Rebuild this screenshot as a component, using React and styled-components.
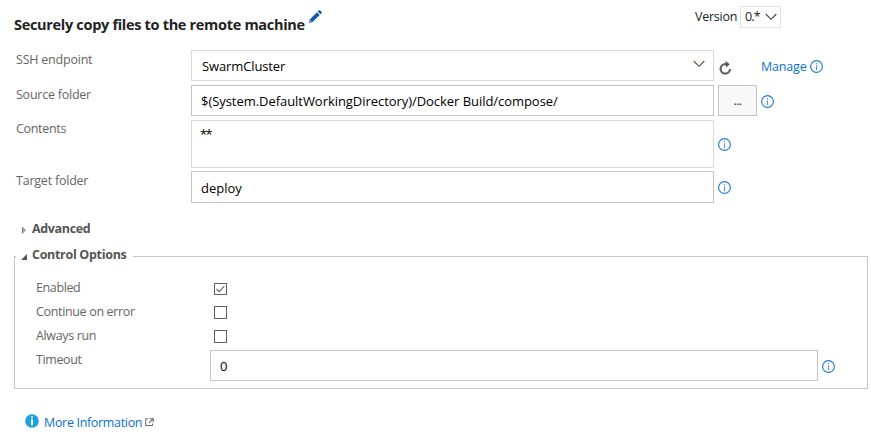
import React from "react";
import styled, { createGlobalStyle } from "styled-components";

const GlobalStyle = createGlobalStyle`
  *, *::before, *::after { box-sizing: border-box; }
  body { margin: 0; background: #fff; }
  svg { display: block; flex: none; }
`;

const Page = styled.main`
  width: 871px;
  height: 446px;
  overflow: hidden;
  background: #fff;
  color: #666;
  font: 12.5px/16px "Open Sans", "Noto Sans", sans-serif;
  white-space: nowrap;
`;

const Header = styled.header`
  display: flex;
  align-items: flex-start;
  height: 50px;
  padding: 6px 90px 0 14px;
`;

const Title = styled.h1`
  margin: 9px 4px 0 0;
  width: 291px;
  color: #222;
  font-size: 14.5px;
  font-weight: 700;
  line-height: 20px;
  letter-spacing: -0.31px;
`;

const EditButton = styled.span`
  margin-top: 4px;
`;

const Version = styled.div`
  display: flex;
  margin-left: auto;
  color: #222;
  letter-spacing: -0.25px;
`;

const VersionLabel = styled.label`
  width: 45px;
  padding-top: 3px;
`;

const VersionSelect = styled.div`
  display: flex;
  justify-content: space-between;
  width: 41px;
  height: 22px;
  padding: 2px 3px 0 4px;
  border: 1px solid #e3e3e3;
  letter-spacing: -0.9px;

  svg { margin-top: 4px; }
`;

const FieldRow = styled.div`
  display: flex;
  align-items: flex-start;
  height: ${(p) => p.$height}px;
  margin-bottom: ${(p) => p.$gap}px;
  padding-left: 16px;
`;

const FieldLabel = styled.label`
  width: 175px;
  padding-top: ${(p) => p.$top}px;
  letter-spacing: ${(p) => p.$spacing}px;
`;

const Field = styled.div`
  display: flex;
  justify-content: space-between;
  width: ${(p) => p.$width || 523}px;
  height: 100%;
  padding: ${(p) => p.$pad || "7px 8px 0 9px"};
  border: 1px solid ${(p) => (p.$light ? "#dadada" : "#c4c4c4")};
  background: #fff;
  color: #000;
  font-size: 13px;
  letter-spacing: ${(p) => p.$spacing || 0}px;
`;

const BrowseButton = styled.button`
  width: 39px;
  height: 31px;
  margin-left: 4px;
  padding: 1px 0 0;
  border: 1px solid #c4c4c4;
  background: #f8f8f8;
  color: #222;
  font: 12px/16px "Open Sans", sans-serif;
  letter-spacing: -0.5px;
`;

const IconSlot = styled.span`
  margin: ${(p) => p.$top}px 0 0 ${(p) => p.$left ?? 4}px;
`;

const Link = styled.a`
  color: #0b72d0;
  letter-spacing: ${(p) => p.$spacing}px;
`;

const ManageLink = styled(Link)`
  width: 49px;
  margin: 9px 0 0 29px;
`;

const SectionTitle = styled.div`
  display: flex;
  align-items: center;
  height: 16px;
  gap: 5px;
  color: #555;
  font-weight: 700;
  letter-spacing: ${(p) => p.$spacing}px;
`;

const Advanced = styled(SectionTitle)`
  margin: 18px 0 10px 21px;
`;

const ControlSection = styled.fieldset`
  width: 854px;
  height: 142px;
  margin: 0 0 0 14px;
  padding: 0;
  border: 1px solid #c8c8c8;
  min-width: 0;
`;

const Legend = styled.legend`
  width: 117px;
  height: 19px;
  margin-left: 1px;
  padding: 0 0 0 5px;
`;

const Options = styled.div`
  padding: 12px 0 0 21px;
`;

const OptionRow = styled.div`
  display: flex;
  align-items: flex-start;
  height: 24px;
`;

const OptionLabel = styled.label`
  width: ${(p) => p.$width || 178}px;
  padding-top: 2px;
  letter-spacing: ${(p) => p.$spacing}px;
`;

const Checkbox = styled.span`
  display: flex;
  align-items: center;
  justify-content: center;
  width: 13px;
  height: ${(p) => (p.$checked ? 12 : 13)}px;
  margin-top: ${(p) => (p.$checked ? 5 : 4)}px;
  border: 1px solid #606060;
`;

const TimeoutBox = styled.div`
  display: flex;
  align-items: flex-start;
  height: 31px;
`;

const Footer = styled.footer`
  display: flex;
  align-items: flex-start;
  padding: 25px 0 0 25px;

  a { width: 101px; margin: 1px 0 0 5px; }
`;

const InfoIcon = () => (
  <svg width="13" height="13" viewBox="0 0 13 13" fill="none">
    <circle cx="6.5" cy="6.5" r="5.9" stroke="#217cd4" strokeWidth="1.15" />
    <path d="M6.5 5.3V10" stroke="#5a8fdc" strokeWidth="1.1" />
    <path d="M6.5 3V4.2" stroke="#5a8fdc" strokeWidth="1.2" />
  </svg>
);

const Chevron = ({ color = "#444" }) => (
  <svg width="12" height="8" viewBox="0 0 12 8" fill="none">
    <path d="M.7 1L6 6.3L11.3 1" stroke={color} strokeWidth="1.15" />
  </svg>
);

const PencilIcon = () => (
  <svg width="13" height="13" viewBox="0 0 13 13" fill="#0e5ba5">
    <path d="M0 13L.8 9.5L8 2.3L10.7 5L3.5 12.1Z" />
    <path d="M8.7 1.6L10.1.3Q10.5 0 10.9.3L12.7 2.1Q13 2.5 12.7 2.9L11.4 4.3Z" />
    <path d="M1.4 10.3L2.7 11.6L.9 12.1Z" fill="#fff" opacity=".75" />
  </svg>
);

const RefreshIcon = () => (
  <svg width="13" height="14" viewBox="0 0 13 14" fill="none">
    <path d="M8 3.2H6.3A4.7 4.7 0 1 0 11 8" stroke="#666" strokeWidth="2.3" />
    <path d="M6.4 0L10.8 3.3L7 6.6Z" fill="#555" />
  </svg>
);

const CheckIcon = () => (
  <svg width="9" height="8" viewBox="0 0 9 8" fill="none">
    <path d="M.5 4L3.1 6.6L8.4 1.1" stroke="#666" strokeWidth="1.1" />
  </svg>
);

const CollapsedIcon = () => (
  <svg width="6" height="9" viewBox="0 0 6 9">
    <path d="M1.4 2.2L4.3 5.2L1.4 8.2Z" fill="#aaa" stroke="#777" strokeWidth=".9" />
  </svg>
);

const ExpandedIcon = () => (
  <svg width="6" height="10" viewBox="0 0 6 10">
    <path d="M6 4V10H0Z" fill="#555" />
  </svg>
);

const MoreInfoIcon = () => (
  <svg width="14" height="14" viewBox="0 0 14 14">
    <circle cx="7" cy="7" r="6.8" fill="#1ba1e2" />
    <path d="M6 2.4H8V4H6ZM6 5.3H8V11.5H6Z" fill="#fff" />
  </svg>
);

const ExternalIcon = () => (
  <svg width="9" height="9" viewBox="0 0 9 9" fill="none" stroke="#666">
    <path d="M3 .8H.7V7.5H7.5V5.7" />
    <path d="M4.5.7H8.2V4.3M8 .9L4 4.8" strokeWidth="1.1" />
  </svg>
);

const toggles = [
  { label: "Enabled", spacing: -0.38, checked: true },
  { label: "Continue on error", spacing: -0.34, checked: false },
  { label: "Always run", spacing: -0.36, checked: false },
];

export default function App() {
  return (
    <Page>
      <GlobalStyle />
      <Header>
        <Title>Securely copy files to the remote machine</Title>
        <EditButton><PencilIcon /></EditButton>
        <Version>
          <VersionLabel>Version</VersionLabel>
          <VersionSelect>0.*<Chevron /></VersionSelect>
        </Version>
      </Header>

      <FieldRow $height={31} $gap={4}>
        <FieldLabel $top={2} $spacing={-0.22}>SSH endpoint</FieldLabel>
        <Field $light $spacing={-0.12} $pad="7px 8px 0 10px">
          SwarmCluster
          <IconSlot $top={2}><Chevron color="#684d3c" /></IconSlot>
        </Field>
        <IconSlot $top={11} $left={5}><RefreshIcon /></IconSlot>
        <ManageLink $spacing={-0.17}>Manage</ManageLink>
        <IconSlot $top={10} $left={0}><InfoIcon /></IconSlot>
      </FieldRow>
      <FieldRow $height={31} $gap={4}>
        <FieldLabel $top={2} $spacing={-0.24}>Source folder</FieldLabel>
        <Field $spacing={-0.05}>$(System.DefaultWorkingDirectory)/Docker Build/compose/</Field>
        <BrowseButton>...</BrowseButton>
        <IconSlot $top={10}><InfoIcon /></IconSlot>
      </FieldRow>
      <FieldRow $height={48} $gap={3}>
        <FieldLabel $top={1} $spacing={-0.32}>Contents</FieldLabel>
        <Field $light $pad="5px 8px 0 8px" $spacing={-1.6}>**</Field>
        <IconSlot $top={18}><InfoIcon /></IconSlot>
      </FieldRow>
      <FieldRow $height={32} $gap={0}>
        <FieldLabel $top={2} $spacing={-0.22}>Target folder</FieldLabel>
        <Field $pad="8px 8px 0 9px">deploy</Field>
        <IconSlot $top={10}><InfoIcon /></IconSlot>
      </FieldRow>

      <Advanced $spacing={-0.35}><CollapsedIcon />Advanced</Advanced>

      <ControlSection>
        <Legend>
          <SectionTitle $spacing={-0.31}><ExpandedIcon />Control Options</SectionTitle>
        </Legend>
        <Options>
          {toggles.map((t) => (
            <OptionRow key={t.label}>
              <OptionLabel $spacing={t.spacing}>{t.label}</OptionLabel>
              <Checkbox $checked={t.checked}>{t.checked && <CheckIcon />}</Checkbox>
            </OptionRow>
          ))}
          <OptionRow>
            <OptionLabel $width={174} $spacing={-0.38}>Timeout</OptionLabel>
            <TimeoutBox>
              <Field $width={608}>0</Field>
              <IconSlot $top={10}><InfoIcon /></IconSlot>
            </TimeoutBox>
          </OptionRow>
        </Options>
      </ControlSection>

      <Footer>
        <MoreInfoIcon />
        <Link $spacing={-0.33}>More Information</Link>
        <IconSlot $top={4} $left={0}><ExternalIcon /></IconSlot>
      </Footer>
    </Page>
  );
}
